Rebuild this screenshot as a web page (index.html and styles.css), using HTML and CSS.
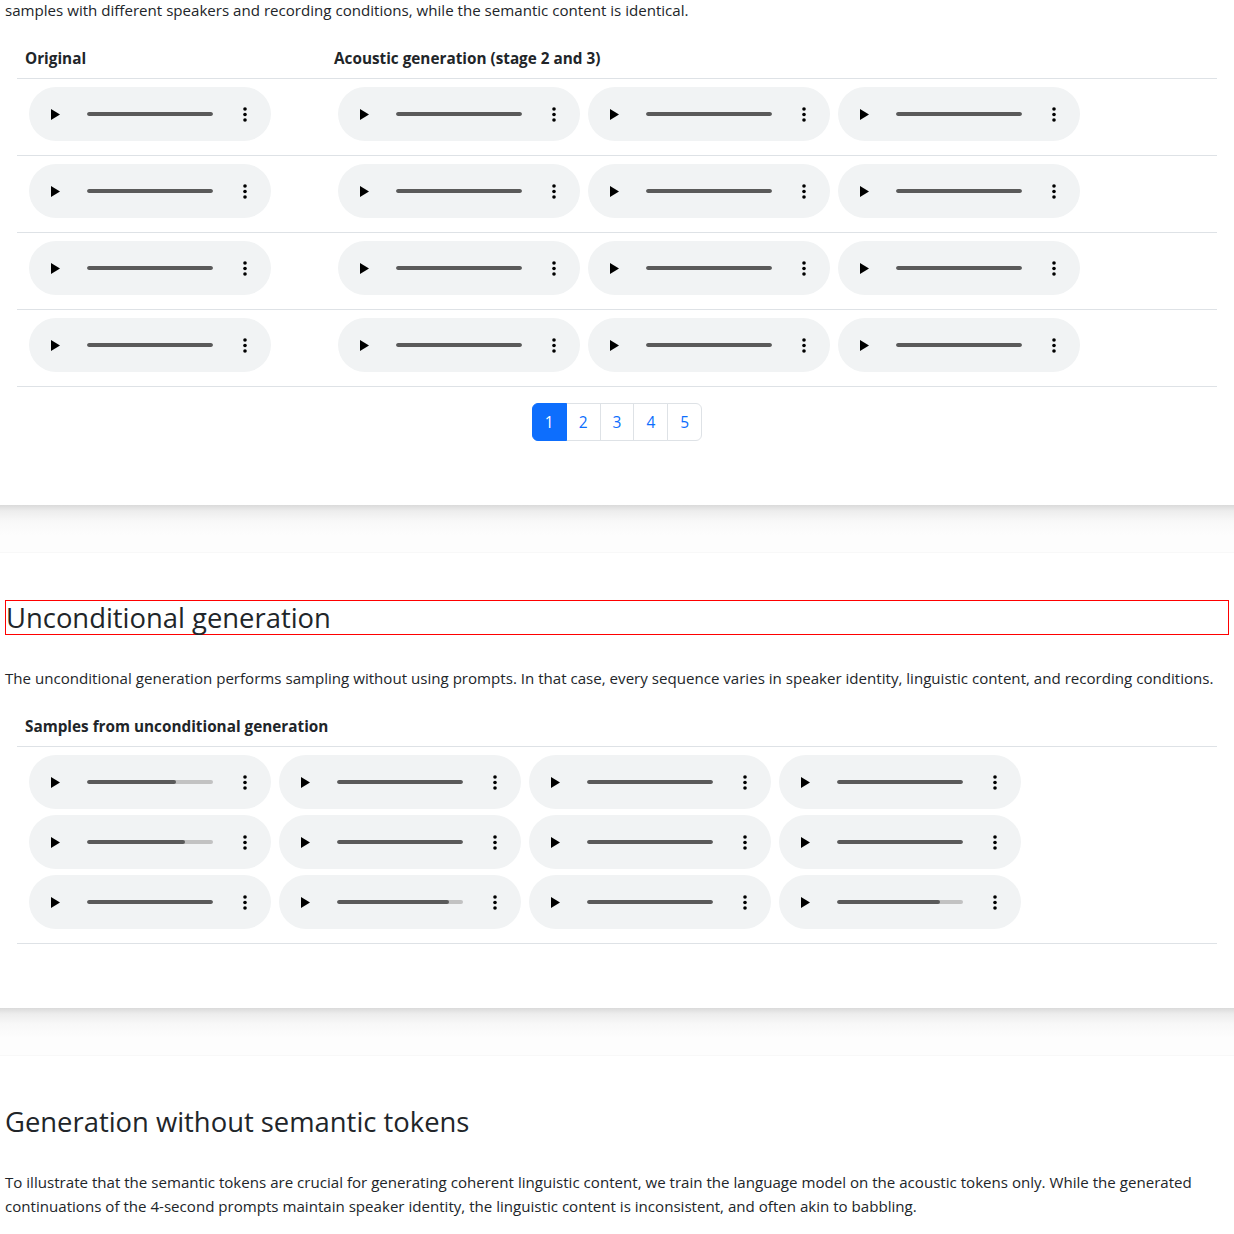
FILE: index.html
```html
<!DOCTYPE html>
<html lang="en">
<head>
    <meta charset="UTF-8">
    <title>Audio samples</title>
    <link rel="stylesheet" href="styles.css">
</head>
<body>
    <section class="section">
        <p class="lead-in">samples with different speakers and recording conditions, while the semantic content is identical.</p>
        <table class="samples">
            <thead>
                <tr>
                    <th class="col-orig">Original</th>
                    <th>Acoustic generation (stage 2 and 3)</th>
                </tr>
            </thead>
            <tbody id="acoustic-rows"></tbody>
        </table>
        <ul class="pagination">
            <li class="active">1</li>
            <li>2</li>
            <li>3</li>
            <li>4</li>
            <li>5</li>
        </ul>
    </section>
    <div class="divider"></div>
    <section class="section">
        <h2 class="title marked">Unconditional generation</h2>
        <p>The unconditional generation performs sampling without using prompts. In that case, every sequence varies in speaker identity, linguistic content, and recording conditions.</p>
        <table class="samples">
            <thead>
                <tr><th>Samples from unconditional generation</th></tr>
            </thead>
            <tbody>
                <tr><td><div class="players" id="uncond-players"></div></td></tr>
            </tbody>
        </table>
    </section>
    <div class="divider"></div>
    <section class="section">
        <h2 class="title">Generation without semantic tokens</h2>
        <p>To illustrate that the semantic tokens are crucial for generating coherent linguistic content, we train the language model on the acoustic tokens only. While the generated continuations of the 4-second prompts maintain speaker identity, the linguistic content is inconsistent, and often akin to babbling.</p>
    </section>
    <script>
        function player(progress) {
            const el = document.createElement('div');
            el.className = 'player';
            el.innerHTML =
                '<svg class="play" width="9" height="11" viewBox="0 0 9 11"><path d="M0 0 L9 5.5 L0 11 Z" fill="#000"/></svg>' +
                '<div class="track"><div class="fill" style="width:' + progress + '%"></div></div>' +
                '<svg class="more" width="4" height="15" viewBox="0 0 4 15"><circle cx="2" cy="2" r="1.8"/><circle cx="2" cy="7.5" r="1.8"/><circle cx="2" cy="13" r="1.8"/></svg>';
            return el;
        }

        const rows = document.getElementById('acoustic-rows');
        for (let r = 0; r < 4; r++) {
            const tr = document.createElement('tr');
            const orig = document.createElement('td');
            const origBox = document.createElement('div');
            origBox.className = 'players';
            origBox.appendChild(player(100));
            orig.appendChild(origBox);
            const gen = document.createElement('td');
            const genBox = document.createElement('div');
            genBox.className = 'players';
            for (let i = 0; i < 3; i++) genBox.appendChild(player(100));
            gen.appendChild(genBox);
            tr.appendChild(orig);
            tr.appendChild(gen);
            rows.appendChild(tr);
        }

        const uncond = [71, 100, 100, 100, 78, 100, 100, 100, 100, 89, 100, 82];
        const box = document.getElementById('uncond-players');
        uncond.forEach(p => box.appendChild(player(p)));
    </script>
</body>
</html>
```
FILE: styles.css
```css
body {
    margin: 0;
    font-family: "Open Sans", "Noto Sans", sans-serif;
    font-size: 15.1px;
    line-height: 24px;
    color: #212529;
    background: #fff;
}
p {
    margin: 0 0 16px;
}
.section {
    padding: 48px 5px;
}
.section:first-child {
    padding-top: 0;
}
.lead-in {
    margin-top: -2px;
}
.title {
    font-size: 27.4px;
    font-weight: 500;
    line-height: 33px;
    margin: 0 0 31px;
    border: 1px solid transparent;
    border-width: 1px 0;
}
.title.marked {
    border: 1px solid #ff0000;
    margin-top: -1px;
}
.samples {
    width: 1200px;
    margin: 0 auto 16px;
    border-collapse: collapse;
}
.samples th {
    text-align: left;
    font-size: 15.3px;
    font-weight: 700;
    padding: 8px;
    border-bottom: 1px solid #dee2e6;
}
.samples td {
    padding: 8px;
    border-bottom: 1px solid #dee2e6;
    vertical-align: top;
}
.samples .col-orig {
    width: 293px;
}
.players {
    display: flex;
    flex-wrap: wrap;
    column-gap: 8px;
    padding-left: 4px;
}
.player {
    width: 242px;
    height: 54px;
    margin-bottom: 6px;
    border-radius: 27px;
    background: #f1f3f4;
    display: flex;
    align-items: center;
    padding-left: 22px;
    box-sizing: border-box;
}
.play {
    flex: none;
}
.track {
    width: 126px;
    height: 4px;
    margin-left: 27px;
    border-radius: 2px;
    background: #c2c2c2;
    overflow: hidden;
}
.fill {
    height: 100%;
    background: #5a5a5a;
    border-radius: 2px;
}
.more {
    margin-left: 30px;
    fill: #000;
}
.pagination {
    display: flex;
    justify-content: center;
    list-style: none;
    margin: 0 0 16px;
    padding: 0;
    font-size: 15.5px;
}
.pagination li {
    padding: 6px 12px;
    line-height: 24px;
    border: 1px solid #dee2e6;
    margin-left: -1px;
    color: #0d6efd;
    background: #fff;
}
.pagination li:first-child {
    border-radius: 6px 0 0 6px;
    margin-left: 0;
}
.pagination li:last-child {
    border-radius: 0 6px 6px 0;
}
.pagination li.active {
    background: #0d6efd;
    border-color: #0d6efd;
    color: #fff;
    position: relative;
}
.divider {
    height: 48px;
    background: linear-gradient(to bottom, #dadada 0, #ededed 6px, #f8f8f8 16px, #fdfdfd 30px, #fdfdfd 100%);
    border-bottom: 1px solid #f8f8f8;
    box-sizing: border-box;
}
```
